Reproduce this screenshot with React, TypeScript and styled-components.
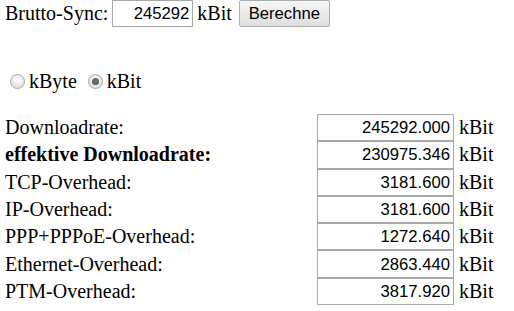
import React from "react";
import styled, { createGlobalStyle } from "styled-components";

const Global = createGlobalStyle`
  html, body { margin: 0; padding: 0; background: #fff; }
  body { font-family: "Liberation Serif", "Times New Roman", serif; font-size: 20px; color: #000; }
`;

const Page = styled.form`
  padding: 0 0 0 5px;
  display: flex;
  flex-direction: column;
`;

const TopRow = styled.div`
  display: flex;
  align-items: center;
  height: 27px;
`;

const Text = styled.span<{ $gap?: number; $lead?: number }>`
  line-height: 23px;
  margin-right: ${(p) => p.$gap ?? 0}px;
  margin-left: ${(p) => p.$lead ?? 0}px;
  white-space: nowrap;
`;

const NumInput = styled.input<{ $w: number; $h?: number }>`
  box-sizing: border-box;
  width: ${(p) => p.$w}px;
  height: ${(p) => p.$h ?? 27}px;
  border: 1px solid #a9a9a9;
  padding: 1px 3px 0 2px;
  margin: 0;
  font-family: "Liberation Sans", Arial, sans-serif;
  font-size: 16.67px;
  color: #000;
  text-align: right;
  background: #fff;
  outline: none;
`;

const Button = styled.button`
  box-sizing: border-box;
  width: 91px;
  height: 27px;
  margin: 0;
  padding: 0 8px;
  border: 1px solid #adadad;
  border-radius: 2px;
  background: linear-gradient(#f6f6f6, #dedede);
  font-family: "Liberation Sans", Arial, sans-serif;
  font-size: 16.67px;
  color: #000;
`;

const RadioRow = styled.div`
  display: flex;
  align-items: center;
  height: 23px;
  margin-top: 43px;
`;

const Radio = styled.span<{ $checked?: boolean; $lead?: number }>`
  box-sizing: border-box;
  display: inline-block;
  width: 15px;
  height: 15px;
  border-radius: 50%;
  border: 1px solid #a4a4a4;
  background: radial-gradient(circle at 50% 35%, #fdfdfd, #d8d8d8);
  margin: 0 4px 0 ${(p) => p.$lead ?? 5}px;
  position: relative;
  &::after {
    content: "";
    display: ${(p) => (p.$checked ? "block" : "none")};
    position: absolute;
    left: 3px;
    top: 3px;
    width: 7px;
    height: 7px;
    border-radius: 50%;
    background: radial-gradient(circle at 50% 40%, #7a7a7a, #4e4e4e);
  }
`;

const Grid = styled.div`
  display: grid;
  grid-template-columns: 312px 137px auto;
  grid-auto-rows: 27.3px;
  margin-top: 21px;
  align-items: center;
`;

const Label = styled.span<{ $bold?: boolean }>`
  font-weight: ${(p) => (p.$bold ? 700 : 400)};
  line-height: 23px;
  white-space: nowrap;
`;

const Unit = styled.span`
  margin-left: 5px;
  line-height: 23px;
`;

const rows: [string, string, boolean?][] = [
  ["Downloadrate:", "245292.000"],
  ["effektive Downloadrate:", "230975.346", true],
  ["TCP-Overhead:", "3181.600"],
  ["IP-Overhead:", "3181.600"],
  ["PPP+PPPoE-Overhead:", "1272.640"],
  ["Ethernet-Overhead:", "2863.440"],
  ["PTM-Overhead:", "3817.920"],
];

export default function App() {
  return (
    <>
      <Global />
      <Page onSubmit={(e) => e.preventDefault()}>
        <TopRow>
          <Text $gap={4}>Brutto-Sync:</Text>
          <NumInput $w={81} defaultValue="245292" />
          <Text $gap={7} $lead={4}>kBit</Text>
          <Button type="button">Berechne</Button>
        </TopRow>
        <RadioRow>
          <Radio />
          <Text $gap={11}>kByte</Text>
          <Radio $checked $lead={0} />
          <Text>kBit</Text>
        </RadioRow>
        <Grid>
          {rows.map(([l, v, b]) => (
            <React.Fragment key={l}>
              <Label $bold={b}>{l}</Label>
              <NumInput $w={137} $h={27.3} defaultValue={v} readOnly />
              <Unit>kBit</Unit>
            </React.Fragment>
          ))}
        </Grid>
      </Page>
    </>
  );
}
